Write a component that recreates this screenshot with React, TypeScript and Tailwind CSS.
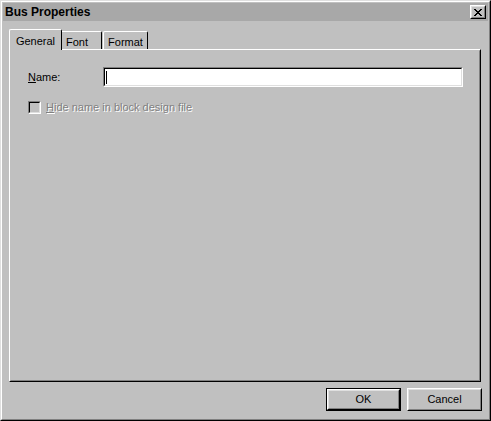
import React from "react";

const font = { fontFamily: '"Liberation Sans", Arial, sans-serif' };

function Raised({ children, className = "" }: { children?: React.ReactNode; className?: string }) {
  return (
    <div className={`border border-t-white border-l-white border-r-black border-b-black ${className}`}>
      <div className="w-full h-full border border-t-[#dfdfdf] border-l-[#dfdfdf] border-r-[#808080] border-b-[#808080] flex items-center justify-center">
        {children}
      </div>
    </div>
  );
}

export default function App() {
  return (
    <div className="w-[491px] h-[421px] bg-[#c0c0c0] text-[11px] text-black" style={font}>
      <div className="w-full h-full border border-t-[#dfdfdf] border-l-[#dfdfdf] border-r-black border-b-black">
        <div className="w-full h-full border border-t-white border-l-white border-r-[#808080] border-b-[#808080] p-px flex flex-col">
          {/* title bar */}
          <div className="h-[18px] bg-[#a8a8a8] flex items-center justify-between pl-[2px] pr-[2px] shrink-0">
            <span className="font-bold text-[12px] leading-none">Bus Properties</span>
            <Raised className="w-[16px] h-[14px] bg-[#c0c0c0]">
              <svg width="8" height="7" viewBox="0 0 8 7" shapeRendering="crispEdges">
                <path d="M0 0h2v1H0zM6 0h2v1H6zM1 1h2v1H1zM5 1h2v1H5zM2 2h4v1H2zM3 3h2v1H3zM2 4h4v1H2zM1 5h2v1H1zM5 5h2v1H5zM0 6h2v1H0zM6 6h2v1H6z" fill="#000" />
              </svg>
            </Raised>
          </div>
          {/* body */}
          <div className="pl-[6px] pt-[8px] flex flex-col">
            {/* tabs */}
            <div className="h-[20px] flex items-end relative z-10">
              <div className="w-[53px] h-[21px] -mb-px bg-[#c0c0c0] border-l border-t border-r border-l-white border-t-white border-r-black rounded-t-[2px] flex items-start justify-center pt-[3px]">
                <span>General</span>
              </div>
              <div className="w-[40px] h-[18px] bg-[#c0c0c0] border-t border-r border-t-white border-r-black rounded-tr-[2px] flex items-start pl-[4px] pt-[2px]">
                <span>Font</span>
              </div>
              <div className="w-[45px] h-[18px] ml-px bg-[#c0c0c0] border-l border-t border-r border-l-white border-t-white border-r-black rounded-t-[2px] flex items-start justify-center pt-[2px]">
                <span>Format</span>
              </div>
            </div>
            {/* panel */}
            <div className="w-[472px] h-[333px] border border-t-white border-l-white border-r-black border-b-black">
              <div className="w-full h-full border border-t-[#c0c0c0] border-l-[#c0c0c0] border-r-[#808080] border-b-[#808080] pt-[16px] pl-[17px]">
                <div className="flex items-center h-[20px]">
                  <span className="w-[75px]">
                    <span className="underline">N</span>ame:
                  </span>
                  <div className="w-[360px] h-[20px] border border-t-[#808080] border-l-[#808080] border-r-white border-b-white">
                    <div className="w-full h-full bg-white border border-t-black border-l-black border-r-[#dfdfdf] border-b-[#dfdfdf] flex items-center pl-[1px]">
                      <div className="w-px h-[13px] bg-black" />
                    </div>
                  </div>
                </div>
                <div className="flex items-center mt-[14px] h-[13px]">
                  <div className="w-[13px] h-[13px] border border-t-[#808080] border-l-[#808080] border-r-white border-b-white">
                    <div className="w-full h-full border border-t-black border-l-black border-r-[#dfdfdf] border-b-[#dfdfdf] bg-[#c0c0c0]" />
                  </div>
                  <span className="ml-[5px] text-[#808080] [text-shadow:1px_1px_0_#ffffff]">
                    <span className="underline">H</span>ide name in block design file
                  </span>
                </div>
              </div>
            </div>
            {/* buttons */}
            <div className="w-[473px] flex justify-end gap-[6px] mt-[6px]">
              <div className="w-[75px] h-[23px] border border-black">
                <Raised className="w-full h-full">
                  <span>OK</span>
                </Raised>
              </div>
              <Raised className="w-[75px] h-[23px]">
                <span>Cancel</span>
              </Raised>
            </div>
          </div>
        </div>
      </div>
    </div>
  );
}
